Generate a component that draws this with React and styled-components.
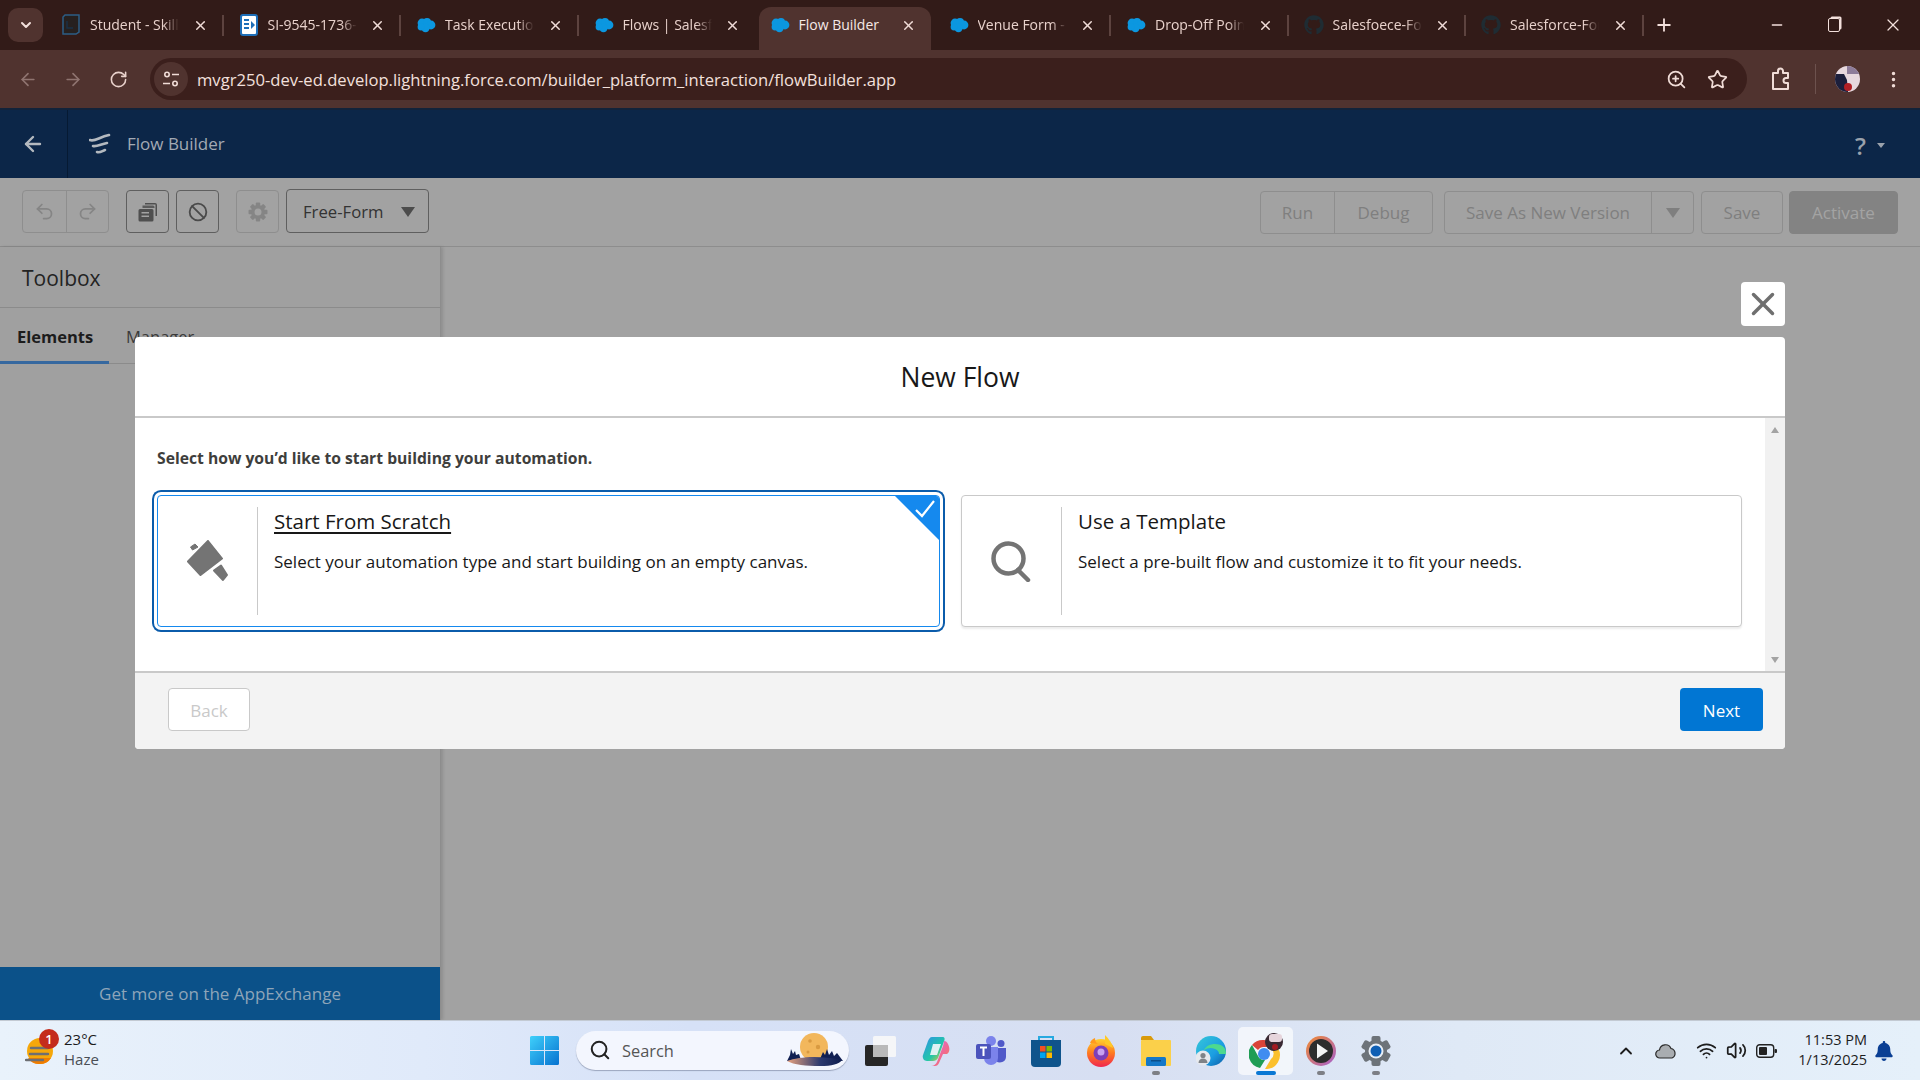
import React from 'react';
import styled, { createGlobalStyle } from 'styled-components';
import {
  ArrowLeft,
  ArrowRight,
  RotateCw,
  ZoomIn,
  Star,
  EllipsisVertical,
  ChevronDown,
  ChevronUp,
  Plus,
  X,
  Minus,
  Undo2,
  Redo2,
  Ban,
  Search,
  Wifi,
  Volume2,
} from 'lucide-react';
import { FaGithub, FaBell } from 'react-icons/fa';

const FONT = '"Open Sans", "Noto Sans", "Liberation Sans", sans-serif';

const GlobalStyle = createGlobalStyle`
  html, body {
    margin: 0;
    padding: 0;
    background: #a2a2a2;
    font-family: ${FONT};
    overflow: hidden;
  }
  * { box-sizing: border-box; }
`;

const Screen = styled.div`
  width: 1920px;
  height: 1080px;
  display: flex;
  flex-direction: column;
  overflow: hidden;
`;

/* ---------- browser chrome ---------- */

const TabStrip = styled.div`
  height: 50px;
  flex: none;
  background: #321b18;
  display: flex;
  align-items: flex-end;
  padding-left: 8px;
  position: relative;
`;

const TabSearch = styled.div`
  width: 35px;
  height: 34px;
  margin: 0 3px 8px 0;
  border-radius: 10px;
  background: #50332f;
  color: #f3e0dc;
  display: flex;
  align-items: center;
  justify-content: center;
`;

const Tab = styled.div`
  width: ${(p) => (p.$active ? '172px' : '177.5px')};
  margin: ${(p) => (p.$active ? '0 3px 0 2.5px' : '0')};
  height: 43px;
  padding: 0 0 7px ${(p) => (p.$active ? '11px' : '15px')};
  display: flex;
  align-items: center;
  border-radius: 12px 12px 0 0;
  position: relative;
  background: ${(p) => (p.$active ? '#50332f' : 'transparent')};

  &::after {
    content: '';
    display: ${(p) => (p.$sep ? 'block' : 'none')};
    position: absolute;
    right: 0;
    top: 8px;
    width: 2px;
    height: 21px;
    background: #5d433f;
  }
`;

const TabIcon = styled.span`
  width: 20px;
  height: 20px;
  flex: none;
  display: flex;
  align-items: center;
  justify-content: center;
  color: #1f2c33;
`;

const TabTitle = styled.span`
  width: 89px;
  margin-left: 9px;
  flex: none;
  font-size: 14px;
  line-height: 20px;
  white-space: nowrap;
  overflow: hidden;
  color: ${(p) => (p.$active ? '#f6e9e6' : '#e9d2cc')};
  -webkit-mask-image: ${(p) =>
    p.$active ? 'none' : 'linear-gradient(90deg, #000 82%, transparent 100%)'};
`;

const TabClose = styled.span`
  width: 16px;
  margin-left: 13px;
  flex: none;
  display: flex;
  justify-content: center;
  color: #f0dcd7;
`;

const NewTab = styled.span`
  margin: 0 0 15px 10px;
  color: #f3e0dc;
  display: flex;
`;

const WindowControls = styled.div`
  margin-left: auto;
  height: 100%;
  display: flex;
  align-items: center;
  padding: 0 17px 0 0;
  gap: 43px;
  color: #f3e0dc;
`;

const RestoreIcon = styled.span`
  width: 12px;
  height: 14px;
  border: 1.5px solid #f3e0dc;
  border-radius: 2px;
  box-shadow: 2px -2px 0 -0.5px #f3e0dc;
`;

const NavRow = styled.div`
  height: 60px;
  flex: none;
  background: #50332f;
  border-bottom: 2px solid #12233a;
  display: flex;
  align-items: center;
  padding-left: 18px;
  color: #e9d2cc;
`;

const NavButton = styled.span`
  width: 20px;
  flex: none;
  margin-right: ${(p) => p.$gap || 25}px;
  display: flex;
  justify-content: center;
  color: ${(p) => (p.$dim ? '#8f7470' : '#e9d2cc')};
`;

const AddressBar = styled.div`
  width: 1597px;
  height: 42px;
  flex: none;
  border-radius: 21px;
  background: #3b1f1c;
  display: flex;
  align-items: center;
  padding: 0 19px 0 4px;
`;

const SiteChip = styled.span`
  width: 34px;
  height: 34px;
  border-radius: 50%;
  background: #50332f;
  display: flex;
  align-items: center;
  justify-content: center;
  flex: none;
`;

const Url = styled.span`
  margin-left: 9px;
  font-size: 16.6px;
  color: #f3e0dc;
  white-space: nowrap;
  flex: 1;
`;

const BarIcons = styled.span`
  display: flex;
  gap: 20px;
  align-items: center;
  color: #f0dcd7;
`;

const NavEnd = styled.div`
  flex: 1;
  display: flex;
  align-items: center;
  padding-left: 23px;
  color: #f0dcd7;
`;

const NavDivider = styled.span`
  width: 1px;
  height: 30px;
  background: #6d524e;
  margin: 0 19px 0 23px;
`;

const Avatar = styled.span`
  width: 25px;
  height: 26px;
  border-radius: 50%;
  overflow: hidden;
  display: flex;
`;

const MoreMenu = styled.span`
  margin-left: 23px;
  display: flex;
`;

/* ---------- flow builder ---------- */

const AppArea = styled.div`
  flex: 1;
  min-height: 0;
  position: relative;
  display: flex;
  flex-direction: column;
  background: #a2a2a2;
`;

const AppHeader = styled.div`
  height: 68px;
  flex: none;
  background: #0c2648;
  display: flex;
  align-items: center;
  color: #a3aab4;
`;

const BackCell = styled.div`
  width: 68px;
  height: 100%;
  border-right: 1px solid #061a33;
  display: flex;
  align-items: center;
  justify-content: center;
  padding-right: 2px;
  color: #b4b9bf;
`;

const AppLogo = styled.span`
  margin-left: 21px;
  display: flex;
`;

const AppName = styled.span`
  margin-left: 16px;
  margin-bottom: 2px;
  font-size: 17px;
`;

const HelpMenu = styled.div`
  margin-left: auto;
  padding: 3px 35px 0 0;
  display: flex;
  align-items: center;
  gap: 11px;
  font-size: 24px;
  font-weight: 600;
  color: #9ba2ac;
`;

const SmallCaret = styled.span`
  width: 0;
  height: 0;
  border-left: 4px solid transparent;
  border-right: 4px solid transparent;
  border-top: 5px solid #9ba2ac;
`;

const Toolbar = styled.div`
  height: 69px;
  flex: none;
  border-bottom: 1px solid #8d8d8d;
  background: #a2a2a2;
  padding: 12px 22px 0;
  display: flex;
  justify-content: space-between;
  align-items: flex-start;
`;

const ToolGroup = styled.div`
  display: flex;
  align-items: center;
  margin-top: ${(p) => p.$top || 0}px;
`;

const IconButton = styled.span`
  width: 43px;
  height: 43px;
  margin: ${(p) => p.$margin || '0'};
  border: 1px solid ${(p) => (p.$on ? '#5f5f5f' : '#8e8e8e')};
  border-radius: 4px;
  display: flex;
  align-items: center;
  justify-content: center;
  color: ${(p) => (p.$on ? '#4a4a4a' : '#858585')};
`;

const Joined = styled.div`
  display: flex;
  height: 43px;
  border: 1px solid #8e8e8e;
  border-radius: 4px;
  margin: ${(p) => p.$margin || '0'};
  color: #7f7f7f;
`;

const JoinedCell = styled.span`
  width: ${(p) => p.$w}px;
  flex: none;
  display: flex;
  align-items: center;
  justify-content: center;
  font-size: 17px;
  & + & {
    border-left: 1px solid #8e8e8e;
  }
`;

const FreeForm = styled.div`
  width: 143px;
  height: 44px;
  margin-left: 7px;
  margin-top: -1px;
  border: 1px solid #5f5f5f;
  border-radius: 4px;
  display: flex;
  align-items: center;
  padding: 1px 0 0 16px;
  font-size: 16.7px;
  color: #333;
  gap: 18px;
`;

const DownCaret = styled.span`
  width: 0;
  height: 0;
  border-left: 7px solid transparent;
  border-right: 7px solid transparent;
  border-top: 10px solid ${(p) => p.$color};
`;

const PlainButton = styled.span`
  width: ${(p) => p.$w}px;
  height: 43px;
  margin-left: ${(p) => p.$ml}px;
  border-radius: 4px;
  border: 1px solid ${(p) => p.$fill || '#8e8e8e'};
  background: ${(p) => p.$fill || 'transparent'};
  color: ${(p) => (p.$fill ? '#a3a3a3' : '#7f7f7f')};
  display: flex;
  align-items: center;
  justify-content: center;
  font-size: 17px;
`;

const Workspace = styled.div`
  flex: 1;
  min-height: 0;
  display: flex;
`;

const Toolbox = styled.aside`
  width: 441px;
  flex: none;
  display: flex;
  flex-direction: column;
  background: #a0a0a0;
  border-right: 1px solid #8d8d8d;
  box-shadow: 2px 0 3px rgba(0, 0, 0, 0.12);
`;

const ToolboxTitle = styled.div`
  height: 61px;
  flex: none;
  border-bottom: 1px solid #8b8b8b;
  padding: 2px 0 0 22px;
  display: flex;
  align-items: center;
  font-size: 21px;
  color: #232323;
`;

const ToolboxTabs = styled.div`
  height: 56px;
  flex: none;
  border-bottom: 1px solid #8b8b8b;
  display: flex;
`;

const ToolboxTab = styled.span`
  padding: 17px 17px 0;
  width: ${(p) => p.$w}px;
  height: 56px;
  font-size: 16.5px;
  font-weight: ${(p) => (p.$active ? 700 : 400)};
  color: ${(p) => (p.$active ? '#1c1c1c' : '#3a3a3a')};
  border-bottom: 3px solid ${(p) => (p.$active ? '#36689f' : 'transparent')};
`;

const ToolboxBody = styled.div`
  flex: 1;
`;

const AppExchange = styled.div`
  height: 53px;
  flex: none;
  background: #0b5189;
  color: #8ea5b9;
  font-size: 17px;
  display: flex;
  align-items: center;
  justify-content: center;
`;

/* ---------- modal ---------- */

const CloseButton = styled.span`
  position: absolute;
  left: 1741px;
  top: 172px;
  width: 44px;
  height: 44px;
  background: #fff;
  border-radius: 4px;
  display: flex;
  align-items: center;
  justify-content: center;
  color: #6f6f6f;
`;

const Modal = styled.div`
  position: absolute;
  left: 135px;
  top: 227px;
  width: 1650px;
  height: 412px;
  background: #fff;
  border-radius: 4px;
  display: flex;
  flex-direction: column;
  overflow: hidden;
`;

const ModalHeader = styled.div`
  height: 81px;
  flex: none;
  border-bottom: 2px solid #c9c9c9;
  display: flex;
  align-items: center;
  justify-content: center;
  font-size: 26.5px;
  color: #181818;
`;

const ModalBody = styled.div`
  flex: 1;
  min-height: 0;
  display: flex;
`;

const ModalContent = styled.div`
  flex: 1;
  padding: 28px 23px 0 22px;
`;

const Prompt = styled.div`
  font-size: 15.7px;
  line-height: 24px;
  font-weight: 700;
  color: #3e3e3c;
  margin-bottom: 25px;
`;

const CardRow = styled.div`
  display: flex;
  gap: 21px;
`;

const Card = styled.div`
  flex: ${(p) => (p.$selected ? '0 0 783px' : '1')};
  height: 132px;
  position: relative;
  display: flex;
  padding: 11px 0;
  background: #fff;
  border-radius: 4px;
  border: 1px solid ${(p) => (p.$selected ? '#1589ee' : '#c9c9c9')};
  box-shadow: ${(p) =>
    p.$selected
      ? '0 0 0 3px #fff, 0 0 0 5px #0b5cab'
      : '0 2px 2px rgba(0, 0, 0, 0.08)'};
`;

const CardIcon = styled.div`
  width: 100px;
  flex: none;
  border-right: 1px solid #c9c9c9;
  display: flex;
  align-items: center;
  justify-content: center;
`;

const CardText = styled.div`
  flex: 1;
  padding-left: 16px;
`;

const CardTitle = styled.div`
  font-size: 20.5px;
  line-height: 28px;
  color: #181818;
  text-decoration: ${(p) => (p.$underline ? 'underline' : 'none')};
  text-underline-offset: 3px;
`;

const CardDesc = styled.div`
  margin-top: 15px;
  font-size: 17px;
  line-height: 24px;
  color: #181818;
`;

const CheckBadge = styled.span`
  position: absolute;
  right: 0;
  top: 0;
  width: 44px;
  height: 44px;
  border-top-right-radius: 3px;
  overflow: hidden;
`;

const ScrollTrack = styled.div`
  width: 20px;
  flex: none;
  background: #f1f1f1;
  display: flex;
  flex-direction: column;
  justify-content: space-between;
  align-items: center;
  padding: 9px 0 8px;
`;

const ScrollArrow = styled.span`
  width: 0;
  height: 0;
  border-left: 4.5px solid transparent;
  border-right: 4.5px solid transparent;
  ${(p) => (p.$up ? 'border-bottom' : 'border-top')}: 6px solid #a3a3a3;
`;

const ModalFooter = styled.div`
  height: 78px;
  flex: none;
  background: #f3f3f3;
  border-top: 2px solid #c9c9c9;
  padding: 15px 22px 0 33px;
  display: flex;
  justify-content: space-between;
  align-items: flex-start;
`;

const BackButton = styled.span`
  width: 82px;
  height: 43px;
  padding-top: 2px;
  background: #fff;
  border: 1px solid #c9c9c9;
  border-radius: 4px;
  color: #c9c9c9;
  font-size: 17px;
  display: flex;
  align-items: center;
  justify-content: center;
`;

const NextButton = styled.span`
  width: 83px;
  height: 43px;
  padding-top: 2px;
  background: #0176d3;
  border-radius: 4px;
  color: #fff;
  font-size: 17px;
  display: flex;
  align-items: center;
  justify-content: center;
`;

/* ---------- windows taskbar ---------- */

const Taskbar = styled.footer`
  height: 60px;
  flex: none;
  position: relative;
  display: flex;
  align-items: center;
  color: #1b1b1b;
  border-top: 1px solid #c3cad3;
  background: linear-gradient(
    90deg,
    #e9f2fb 0%,
    #e0eafa 22%,
    #d6e1f7 36%,
    #d7dff2 58%,
    #dfe9f6 76%,
    #e5f0fa 100%
  );
`;

const Weather = styled.div`
  width: 517px;
  flex: none;
  padding-left: 25px;
  display: flex;
  align-items: center;
`;

const WeatherIcon = styled.span`
  width: 39px;
  height: 40px;
  position: relative;
  flex: none;
  display: flex;
  align-items: center;
`;

const WeatherBadge = styled.span`
  position: absolute;
  left: 14px;
  top: -2px;
  width: 20px;
  height: 20px;
  border-radius: 50%;
  background: #c42b1c;
  color: #fff;
  font-size: 13px;
  font-weight: 600;
  display: flex;
  align-items: center;
  justify-content: center;
`;

const WeatherText = styled.div`
  font-size: 15px;
  line-height: 20px;
  display: flex;
  flex-direction: column;
  margin-top: -3px;
  span + span {
    color: #4a4f55;
  }
`;

const TaskSlot = styled.span`
  width: 55px;
  height: 48px;
  flex: none;
  position: relative;
  display: flex;
  align-items: center;
  justify-content: center;
  border-radius: 5px;
  background: ${(p) => (p.$active ? 'rgba(255, 255, 255, 0.65)' : 'transparent')};
  &::after {
    content: '';
    display: ${(p) => (p.$running || p.$active ? 'block' : 'none')};
    position: absolute;
    bottom: 0;
    left: 50%;
    transform: translateX(-50%);
    width: ${(p) => (p.$active ? '20px' : '8px')};
    height: 4px;
    border-radius: 2px;
    background: ${(p) => (p.$active ? '#0a78d4' : '#7d7f85')};
  }
`;

const SearchPill = styled.div`
  width: 273px;
  height: 39px;
  flex: none;
  margin: -1px 4px 0 4px;
  position: relative;
  border-radius: 20px;
  background: #f3f6fe;
  box-shadow: 0 1px 1px rgba(80, 90, 120, 0.45);
  display: flex;
  align-items: center;
  padding-left: 13px;
  gap: 11px;
  font-size: 16.4px;
  color: #555;
`;

const PillArt = styled.span`
  position: absolute;
  right: 6px;
  top: 2px;
  display: flex;
`;

const Tray = styled.div`
  position: absolute;
  right: 0;
  top: 0;
  height: 100%;
  display: flex;
  align-items: center;
  padding-right: 26px;
  color: #1d1d1d;
`;

const TraySlot = styled.span`
  width: 30px;
  display: flex;
  justify-content: center;
  margin-right: ${(p) => p.$gap || 0}px;
`;

const Clock = styled.div`
  margin: -2px 7px 0 17px;
  font-size: 14.5px;
  line-height: 20px;
  text-align: right;
`;

/* ---------- drawings ---------- */

const Cloud = () => (
  <svg width="20" height="16" viewBox="0 0 20 16">
    <g fill="#0b97e0">
      <circle cx="6" cy="6" r="4.4" />
      <circle cx="11" cy="5" r="4" />
      <circle cx="15" cy="8" r="4.4" />
      <circle cx="9.5" cy="11" r="4.2" />
      <circle cx="5" cy="10" r="3.4" />
    </g>
  </svg>
);

const StudentIcon = () => (
  <svg width="20" height="24" viewBox="0 0 20 24">
    <path d="M4 2h14v17l-3 2H2V4z" fill="#26201f" stroke="#2c5d85" strokeWidth="1.5" />
    <path d="M6 8v7h6" fill="none" stroke="#1a3147" strokeWidth="1.4" />
  </svg>
);

const DocIcon = () => (
  <svg width="20" height="24" viewBox="0 0 20 24">
    <rect x="1" y="1" width="18" height="22" rx="3" fill="#1d6eb8" />
    <rect x="3" y="3" width="14" height="18" rx="1" fill="#fff" />
    <rect x="5" y="6" width="5" height="2" fill="#1d6eb8" />
    <rect x="5" y="10" width="5" height="2" fill="#1d6eb8" />
    <rect x="5" y="14" width="5" height="2" fill="#1d6eb8" />
    <path d="M12 8l4 4-4 4z" fill="#1d6eb8" />
  </svg>
);

const TuneIcon = () => (
  <svg width="18" height="18" viewBox="0 0 18 18" fill="none" stroke="#f0dcd7" strokeWidth="1.6">
    <circle cx="5" cy="4.5" r="2.2" />
    <path d="M10 4.5h7M1 13.5h7" />
    <circle cx="13" cy="13.5" r="2.2" />
  </svg>
);

const ExtensionIcon = () => (
  <svg width="22" height="26" viewBox="0 0 22 26" fill="none" stroke="#f0dcd7" strokeWidth="2" strokeLinejoin="round">
    <path d="M3 7h5V5a2.5 2.5 0 0 1 5 0v2h5v5h-2a2.5 2.5 0 0 0 0 5h2v6H3z" />
  </svg>
);

const AvatarArt = () => (
  <svg width="25" height="26" viewBox="0 0 25 26">
    <rect width="25" height="26" fill="#e7d8de" />
    <path d="M0 8h9l3 6 1 12H0z" fill="#1c1f3c" />
    <rect x="12" y="0" width="13" height="8" fill="#8d7c9a" />
    <circle cx="13" cy="21" r="4" fill="#b11f24" />
  </svg>
);

const FlowLogo = () => (
  <svg width="22" height="22" viewBox="0 0 22 22" fill="none" stroke="#b4b9bf" strokeWidth="2.6" strokeLinecap="round">
    <path d="M1 7c5 2 9-3 19-5" />
    <path d="M4 13c4 1 8-2 14-3" />
    <path d="M8 19c3 1 5-1 8-2" />
  </svg>
);

const CopyIcon = () => (
  <svg width="20" height="20" viewBox="0 0 20 20" fill="#4f4f4f">
    <path d="M7 1h10a2 2 0 0 1 2 2v11h-1.5V2.5H7z" />
    <path d="M4.5 3.5H15A1.5 1.5 0 0 1 16.5 5v1h-12z" opacity="0.85" />
    <path fillRule="evenodd" d="M2 7h12a1.5 1.5 0 0 1 1.5 1.5V18a1.5 1.5 0 0 1-1.5 1.5H2A1.5 1.5 0 0 1 .5 18V8.500A1.5 1.5 0 0 1 2 7zm1.5 3v1.5H11V10zm0 3.5V15H11v-1.5z" />
  </svg>
);

const GearGlyph = () => (
  <svg width="20" height="20" viewBox="0 0 20 20">
    <g fill="#858585">
      {[0, 45, 90, 135, 180, 225, 270, 315].map((deg) => (
        <rect key={deg} x="7.8" y="0.5" width="4.4" height="5" rx="1" transform={`rotate(${deg} 10 10)`} />
      ))}
    </g>
    <circle cx="10" cy="10" r="5.2" fill="none" stroke="#858585" strokeWidth="3.4" />
  </svg>
);

const HammerIcon = () => (
  <svg width="42" height="42" viewBox="0 0 42 42" fill="#747474" stroke="#747474" strokeWidth="2" strokeLinejoin="round">
    <path d="M21 1l14 17.5L13.5 35 1 21.5z" />
    <path d="M27 30.5l7-5 6 9.5-4 5z" />
    <path d="M3.5 7L8 4l3 3-5.5 3z" strokeWidth="1" />
  </svg>
);

const TemplateSearch = () => (
  <svg width="41" height="41" viewBox="0 0 41 41" fill="none" stroke="#747474" strokeWidth="4.5" strokeLinecap="round">
    <circle cx="17.5" cy="17.5" r="15" />
    <path d="M27 29l10 10" />
  </svg>
);

const CheckCorner = () => (
  <svg width="44" height="44" viewBox="0 0 44 44">
    <path d="M0 0h44v44z" fill="#1589ee" />
    <path d="M21 14l6 6 12-15" fill="none" stroke="#fff" strokeWidth="2.2" />
  </svg>
);

const HazeIcon = () => (
  <svg width="28" height="28" viewBox="0 0 28 28">
    <circle cx="15" cy="14" r="13" fill="#f5a70a" />
    <path d="M3 21h23a13 13 0 0 1-11 6 13 13 0 0 1-12-6z" fill="#f07d00" />
    <g stroke="#6d6f73" strokeWidth="2.4" strokeLinecap="round">
      <path d="M6 11h17M5 17h18M1 23h17" />
    </g>
  </svg>
);

const WindowsLogo = () => (
  <svg width="29" height="29" viewBox="0 0 29 29">
    <defs>
      <linearGradient id="winlogo" x1="0" y1="0" x2="1" y2="1">
        <stop offset="0" stopColor="#3fd0fb" />
        <stop offset="1" stopColor="#0672d0" />
      </linearGradient>
    </defs>
    <path d="M1.5 0H14v14H0V1.5A1.5 1.5 0 0 1 1.5 0zM15 0h12.5A1.5 1.5 0 0 1 29 1.5V14H15zM0 15h14v14H1.5A1.5 1.5 0 0 1 0 27.5zM15 15h14v12.5a1.5 1.5 0 0 1-1.5 1.5H15z" fill="url(#winlogo)" />
  </svg>
);

const MoonScene = () => (
  <svg width="57" height="34" viewBox="0 0 57 34">
    <defs>
      <linearGradient id="ground" x1="0" y1="0" x2="1" y2="0">
        <stop offset="0" stopColor="#e9a27d" />
        <stop offset="0.6" stopColor="#2c3a70" />
        <stop offset="1" stopColor="#0d1c4d" />
      </linearGradient>
    </defs>
    <circle cx="28" cy="14" r="14" fill="#f2b75c" />
    <circle cx="24" cy="8" r="1.8" fill="#d99a41" />
    <circle cx="32" cy="14" r="2.2" fill="#d99a41" />
    <circle cx="22" cy="19" r="1.5" fill="#d99a41" />
    <path d="M1 28l3-6 1-6 2 5 2-3 1 4 3-1 2 6z" fill="#101f52" />
    <path d="M34 26l3-7 2 3 2-6 2 6 3-4 2 5 3-3 6 8z" fill="#101f52" />
    <path d="M1 28c12-4 30-6 55-1-3 4-10 6-22 6-14 0-26-1-33-5z" fill="url(#ground)" />
  </svg>
);

const TaskView = () => (
  <svg width="31" height="30" viewBox="0 0 31 30">
    <rect x="0" y="9" width="23" height="21" rx="2" fill="#262626" />
    <rect x="8" y="0" width="23" height="21" rx="1.5" fill="#f7f7f7" opacity="0.92" />
    <rect x="8" y="9" width="15" height="12" fill="#b9b9b9" />
  </svg>
);

const Copilot = () => (
  <svg width="28" height="30" viewBox="0 0 28 30">
    <defs>
      <linearGradient id="copA" x1="0" y1="0" x2="1" y2="1">
        <stop offset="0" stopColor="#2f8fe8" />
        <stop offset="0.6" stopColor="#22c7a8" />
        <stop offset="1" stopColor="#f6c62c" />
      </linearGradient>
      <linearGradient id="copB" x1="0" y1="0" x2="1" y2="1">
        <stop offset="0" stopColor="#d66be6" />
        <stop offset="0.6" stopColor="#f06a8e" />
        <stop offset="1" stopColor="#f58a34" />
      </linearGradient>
    </defs>
    <path d="M10 1h11c1 0 2 1 1.5 3L16 22c-1 2-3 3-5 3H5c-3 0-5-3-4-6l5-14c1-2 2-4 4-4z" fill="url(#copA)" />
    <path d="M22 5c2 0 3 1 4 3 2 4 2 8-1 10h-4l-4 9c-1 2-2 3-4 3H9c3 0 5-2 6-4l6-16c.5-2 1-4 1-5z" fill="url(#copB)" />
    <path d="M11 8h8l-4 11H8z" fill="#f4f6fb" opacity="0.9" />
  </svg>
);

const Teams = () => (
  <svg width="30" height="30" viewBox="0 0 30 30">
    <circle cx="15" cy="5" r="5" fill="#7b83eb" />
    <circle cx="25" cy="7.5" r="3.5" fill="#5059c9" />
    <path d="M20 12h10v9a6 6 0 0 1-10 4z" fill="#5059c9" />
    <path d="M8 11h14v11a7 7 0 0 1-14 0z" fill="#7b83eb" />
    <rect x="0" y="8" width="15" height="15" rx="2" fill="#4b53bc" />
    <path d="M4 11.5h7M7.5 11.5V20" stroke="#fff" strokeWidth="2" />
  </svg>
);

const Store = () => (
  <svg width="30" height="32" viewBox="0 0 30 32">
    <path d="M8 6V2h14v4" fill="none" stroke="#27a9e0" strokeWidth="2" />
    <path d="M0 5h30v23a4 4 0 0 1-4 4H4a4 4 0 0 1-4-4z" fill="#0f548c" />
    <rect x="9" y="11" width="5.5" height="5.5" fill="#f25022" />
    <rect x="15.5" y="11" width="5.5" height="5.5" fill="#7fba00" />
    <rect x="9" y="17.5" width="5.5" height="5.5" fill="#00a4ef" />
    <rect x="15.5" y="17.5" width="5.5" height="5.5" fill="#ffb900" />
  </svg>
);

const Firefox = () => (
  <svg width="28" height="32" viewBox="0 0 28 32">
    <defs>
      <linearGradient id="ffx" x1="0.5" y1="0" x2="0.5" y2="1">
        <stop offset="0" stopColor="#ffd12e" />
        <stop offset="0.5" stopColor="#ff7a1f" />
        <stop offset="1" stopColor="#f0264f" />
      </linearGradient>
    </defs>
    <circle cx="14" cy="18" r="14" fill="url(#ffx)" />
    <path d="M18 0c4 4 7 8 8 13l-8-4z" fill="#ffc928" />
    <path d="M3 8c1-3 3-4 5-5 0 3 1 5 3 6z" fill="#ff9a1f" />
    <circle cx="14" cy="18" r="7.5" fill="#7d3fb8" />
    <circle cx="14" cy="17" r="3.5" fill="#c8a2f0" />
  </svg>
);

const Explorer = () => (
  <svg width="30" height="30" viewBox="0 0 30 30">
    <path d="M0 2a2 2 0 0 1 2-2h8l3 4H0z" fill="#d99a0a" />
    <rect x="0" y="4" width="30" height="26" rx="1" fill="#fbd04a" />
    <rect x="5" y="21" width="20" height="9" rx="1.5" fill="#1478c8" />
    <rect x="10" y="24" width="10" height="1.5" fill="#0b4f8a" />
  </svg>
);

const Edge = () => (
  <svg width="30" height="30" viewBox="0 0 30 30">
    <defs>
      <linearGradient id="edg" x1="0" y1="0" x2="1" y2="1">
        <stop offset="0" stopColor="#36c8d8" />
        <stop offset="0.6" stopColor="#1b9de2" />
        <stop offset="1" stopColor="#0c59a4" />
      </linearGradient>
    </defs>
    <circle cx="15" cy="15" r="15" fill="url(#edg)" />
    <path d="M30 17c0-6-5-9-11-9-5 0-9 2-11 6 3-2 7-3 11-1 3 1 4 3 4 5h7z" fill="#4dd98f" />
    <circle cx="7" cy="22" r="7.5" fill="#e6e9ee" />
    <circle cx="7" cy="19.5" r="2.6" fill="#7f8388" />
    <path d="M2.5 27c0-3 2-4.5 4.5-4.5s4.5 1.5 4.5 4.5z" fill="#7f8388" />
  </svg>
);

const ChromeLogo = () => (
  <svg width="34" height="36" viewBox="0 0 34 36">
    <path d="M15 7a14 14 0 0 1 12 7H15a7 7 0 0 0-6 3L3 12a14 14 0 0 1 12-5z" fill="#db4437" />
    <path d="M3 12l6 11a7 7 0 0 0 7 4l-5 8A14 14 0 0 1 3 12z" fill="#1f9d55" />
    <path d="M29 15a14 14 0 0 1-13 21l6-10a7 7 0 0 0 0-11z" fill="#fbc02d" />
    <circle cx="15" cy="21" r="6" fill="#3f8cf0" />
    <circle cx="25" cy="9" r="9" fill="#3a2a33" />
    <rect x="20" y="1" width="13" height="8" rx="3" fill="#e6d5dc" />
    <circle cx="26" cy="14" r="3" fill="#a31b22" />
  </svg>
);

const Player = () => (
  <svg width="30" height="30" viewBox="0 0 30 30">
    <defs>
      <linearGradient id="ply" x1="0" y1="0" x2="1" y2="1">
        <stop offset="0" stopColor="#f28a2d" />
        <stop offset="1" stopColor="#a55fd0" />
      </linearGradient>
    </defs>
    <circle cx="15" cy="15" r="15" fill="url(#ply)" />
    <circle cx="15" cy="15" r="12" fill="#2d2d2d" />
    <path d="M11 7.5L22 15l-11 7.5z" fill="#f4f4f4" />
  </svg>
);

const SettingsGear = () => (
  <svg width="30" height="30" viewBox="0 0 30 30">
    <g fill="#6d7379">
      {[0, 60, 120, 180, 240, 300].map((deg) => (
        <rect key={deg} x="10.5" y="0" width="9" height="8" rx="2" transform={`rotate(${deg} 15 15)`} />
      ))}
    </g>
    <circle cx="15" cy="15" r="11" fill="#6d7379" />
    <circle cx="15" cy="15" r="7.5" fill="#e9eff7" />
    <circle cx="15" cy="15" r="5.5" fill="#0f5fb4" />
  </svg>
);

const CloudTray = () => (
  <svg width="22" height="16" viewBox="0 0 22 16">
    <path d="M5 15a4 4 0 0 1-.5-8A6 6 0 0 1 16 5.5 5 5 0 0 1 17 15z" fill="#a9adb1" stroke="#2b2b2b" strokeWidth="1.2" />
  </svg>
);

const Battery = () => (
  <svg width="21" height="14" viewBox="0 0 21 14">
    <rect x="0.7" y="0.7" width="17" height="12.6" rx="3" fill="none" stroke="#222" strokeWidth="1.4" />
    <rect x="3" y="3" width="8" height="8" rx="1" fill="#222" />
    <rect x="18.5" y="5" width="2.5" height="4" rx="1" fill="#222" />
  </svg>
);

const TABS = [
  { id: 'student', title: 'Student - Skills', icon: <StudentIcon />, sep: true },
  { id: 'si', title: 'SI-9545-1736-xyz', icon: <DocIcon />, sep: true },
  { id: 'task', title: 'Task Execution', icon: <Cloud />, sep: true },
  { id: 'flows', title: 'Flows | Salesforce', icon: <Cloud /> },
  { id: 'builder', title: 'Flow Builder', icon: <Cloud />, active: true },
  { id: 'venue', title: 'Venue Form -', icon: <Cloud />, sep: true },
  { id: 'drop', title: 'Drop-Off Points', icon: <Cloud />, sep: true },
  { id: 'gh1', title: 'Salesfoece-Form', icon: <FaGithub size={20} />, sep: true },
  { id: 'gh2', title: 'Salesforce-Form', icon: <FaGithub size={20} />, sep: true },
];

const PINNED = [
  { id: 'view', art: <TaskView /> },
  { id: 'copilot', art: <Copilot /> },
  { id: 'teams', art: <Teams /> },
  { id: 'store', art: <Store /> },
  { id: 'firefox', art: <Firefox /> },
  { id: 'explorer', art: <Explorer />, running: true },
  { id: 'edge', art: <Edge /> },
  { id: 'chrome', art: <ChromeLogo />, active: true },
  { id: 'player', art: <Player />, running: true },
  { id: 'settings', art: <SettingsGear />, running: true },
];

const App = () => (
  <Screen>
    <GlobalStyle />

    <TabStrip>
      <TabSearch>
        <ChevronDown size={16} strokeWidth={3} />
      </TabSearch>
      {TABS.map((tab) => (
        <Tab key={tab.id} $active={tab.active} $sep={tab.sep}>
          <TabIcon>{tab.icon}</TabIcon>
          <TabTitle $active={tab.active}>{tab.title}</TabTitle>
          <TabClose>
            <X size={15} strokeWidth={2.4} />
          </TabClose>
        </Tab>
      ))}
      <NewTab>
        <Plus size={20} strokeWidth={2.2} />
      </NewTab>
      <WindowControls>
        <Minus size={16} />
        <RestoreIcon />
        <X size={20} strokeWidth={1.5} />
      </WindowControls>
    </TabStrip>

    <NavRow>
      <NavButton $dim>
        <ArrowLeft size={21} />
      </NavButton>
      <NavButton $dim>
        <ArrowRight size={21} />
      </NavButton>
      <NavButton $gap={22}>
        <RotateCw size={19} />
      </NavButton>
      <AddressBar>
        <SiteChip>
          <TuneIcon />
        </SiteChip>
        <Url>mvgr250-dev-ed.develop.lightning.force.com/builder_platform_interaction/flowBuilder.app</Url>
        <BarIcons>
          <ZoomIn size={21} />
          <Star size={21} />
        </BarIcons>
      </AddressBar>
      <NavEnd>
        <ExtensionIcon />
        <NavDivider />
        <Avatar>
          <AvatarArt />
        </Avatar>
        <MoreMenu>
          <EllipsisVertical size={21} />
        </MoreMenu>
      </NavEnd>
    </NavRow>

    <AppArea>
      <AppHeader>
        <BackCell>
          <ArrowLeft size={24} strokeWidth={2.4} />
        </BackCell>
        <AppLogo>
          <FlowLogo />
        </AppLogo>
        <AppName>Flow Builder</AppName>
        <HelpMenu>
          ?
          <SmallCaret />
        </HelpMenu>
      </AppHeader>

      <Toolbar>
        <ToolGroup>
          <Joined>
            <JoinedCell $w={43}>
              <Undo2 size={21} color="#858585" />
            </JoinedCell>
            <JoinedCell $w={42}>
              <Redo2 size={21} color="#858585" />
            </JoinedCell>
          </Joined>
          <IconButton $on $margin="0 0 0 17px">
            <CopyIcon />
          </IconButton>
          <IconButton $on $margin="0 0 0 7px">
            <Ban size={20} strokeWidth={2.2} />
          </IconButton>
          <IconButton $margin="0 0 0 17px">
            <GearGlyph />
          </IconButton>
          <FreeForm>
            Free-Form
            <DownCaret $color="#4c4c4c" />
          </FreeForm>
        </ToolGroup>
        <ToolGroup $top={1}>
          <Joined>
            <JoinedCell $w={73}>Run</JoinedCell>
            <JoinedCell $w={98}>Debug</JoinedCell>
          </Joined>
          <Joined $margin="0 0 0 11px">
            <JoinedCell $w={206}>Save As New Version</JoinedCell>
            <JoinedCell $w={42}>
              <DownCaret $color="#7f7f7f" />
            </JoinedCell>
          </Joined>
          <PlainButton $w={82} $ml={7}>
            Save
          </PlainButton>
          <PlainButton $w={109} $ml={6} $fill="#838383">
            Activate
          </PlainButton>
        </ToolGroup>
      </Toolbar>

      <Workspace>
        <Toolbox>
          <ToolboxTitle>Toolbox</ToolboxTitle>
          <ToolboxTabs>
            <ToolboxTab $active $w={109}>
              Elements
            </ToolboxTab>
            <ToolboxTab>Manager</ToolboxTab>
          </ToolboxTabs>
          <ToolboxBody />
          <AppExchange>Get more on the AppExchange</AppExchange>
        </Toolbox>
      </Workspace>

      <CloseButton>
        <X size={38} strokeWidth={2.2} />
      </CloseButton>

      <Modal>
        <ModalHeader>New Flow</ModalHeader>
        <ModalBody>
          <ModalContent>
            <Prompt>Select how you’d like to start building your automation.</Prompt>
            <CardRow>
              <Card $selected>
                <CardIcon>
                  <HammerIcon />
                </CardIcon>
                <CardText>
                  <CardTitle $underline>Start From Scratch</CardTitle>
                  <CardDesc>Select your automation type and start building on an empty canvas.</CardDesc>
                </CardText>
                <CheckBadge>
                  <CheckCorner />
                </CheckBadge>
              </Card>
              <Card>
                <CardIcon>
                  <TemplateSearch />
                </CardIcon>
                <CardText>
                  <CardTitle>Use a Template</CardTitle>
                  <CardDesc>Select a pre-built flow and customize it to fit your needs.</CardDesc>
                </CardText>
              </Card>
            </CardRow>
          </ModalContent>
          <ScrollTrack>
            <ScrollArrow $up />
            <ScrollArrow />
          </ScrollTrack>
        </ModalBody>
        <ModalFooter>
          <BackButton>Back</BackButton>
          <NextButton>Next</NextButton>
        </ModalFooter>
      </Modal>
    </AppArea>

    <Taskbar>
      <Weather>
        <WeatherIcon>
          <HazeIcon />
          <WeatherBadge>1</WeatherBadge>
        </WeatherIcon>
        <WeatherText>
          <span>23°C</span>
          <span>Haze</span>
        </WeatherText>
      </Weather>
      <TaskSlot>
        <WindowsLogo />
      </TaskSlot>
      <SearchPill>
        <Search size={22} color="#222" strokeWidth={2.2} />
        Search
        <PillArt>
          <MoonScene />
        </PillArt>
      </SearchPill>
      {PINNED.map((item) => (
        <TaskSlot key={item.id} $running={item.running} $active={item.active}>
          {item.art}
        </TaskSlot>
      ))}
      <Tray>
        <TraySlot $gap={10}>
          <ChevronUp size={20} strokeWidth={2.2} />
        </TraySlot>
        <TraySlot $gap={10}>
          <CloudTray />
        </TraySlot>
        <TraySlot>
          <Wifi size={21} />
        </TraySlot>
        <TraySlot>
          <Volume2 size={21} />
        </TraySlot>
        <TraySlot>
          <Battery />
        </TraySlot>
        <Clock>
          11:53 PM
          <br />
          1/13/2025
        </Clock>
        <FaBell size={20} color="#0a3f94" />
      </Tray>
    </Taskbar>
  </Screen>
);

export default App;
